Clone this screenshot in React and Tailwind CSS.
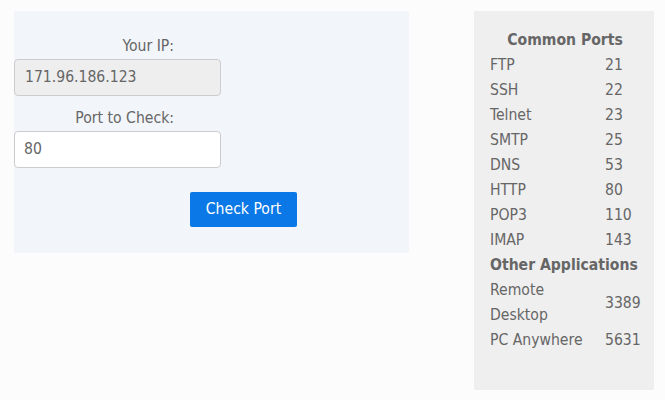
import React from "react";

const common = [
  ["FTP", "21"],
  ["SSH", "22"],
  ["Telnet", "23"],
  ["SMTP", "25"],
  ["DNS", "53"],
  ["HTTP", "80"],
  ["POP3", "110"],
  ["IMAP", "143"],
];

const App = () => {
  return (
    <div className="w-[665px] h-[400px] bg-[#fcfcfc] text-[#666] text-[15.6px] font-['DejaVu_Sans_Condensed','DejaVu_Sans',sans-serif] flex items-start pt-[11px] pl-[14px]">
      <div className="w-[395px] h-[242px] bg-[#f2f5f9] flex flex-col">
        <div className="w-[160px] text-right pt-[25px] leading-[20px]">Your IP:</div>
        <div className="mt-[3px] w-[207px] h-[37px] bg-[#eeeeee] border border-[#cccccc] rounded-[4px] px-[10px] flex items-center">
          171.96.186.123
        </div>
        <div className="w-[160px] text-right mt-[12px] leading-[20px]">Port to Check:</div>
        <div className="mt-[3px] w-[207px] h-[37px] bg-white border border-[#cccccc] rounded-[4px] px-[9px] flex items-center">
          80
        </div>
        <button className="ml-[176px] mt-[24px] w-[107px] h-[35px] bg-[#0a78e6] text-white rounded-[2px] text-[15.6px]">
          Check Port
        </button>
      </div>
      <div className="ml-[65px] w-[180px] h-[379px] bg-[#efefef] pt-[17px] pl-[16px] pr-[10px] leading-[25px]">
        <div className="text-center font-bold pr-[4px]">Common Ports</div>
        {common.map(([name, port]) => (
          <div key={name} className="flex">
            <span className="w-[115px] shrink-0">{name}</span>
            <span>{port}</span>
          </div>
        ))}
        <div className="font-bold whitespace-nowrap">Other Applications</div>
        <div className="flex items-center">
          <span className="w-[115px] shrink-0">Remote<br />Desktop</span>
          <span>3389</span>
        </div>
        <div className="flex">
          <span className="w-[115px] shrink-0">PC Anywhere</span>
          <span>5631</span>
        </div>
      </div>
    </div>
  );
};

export default App;
